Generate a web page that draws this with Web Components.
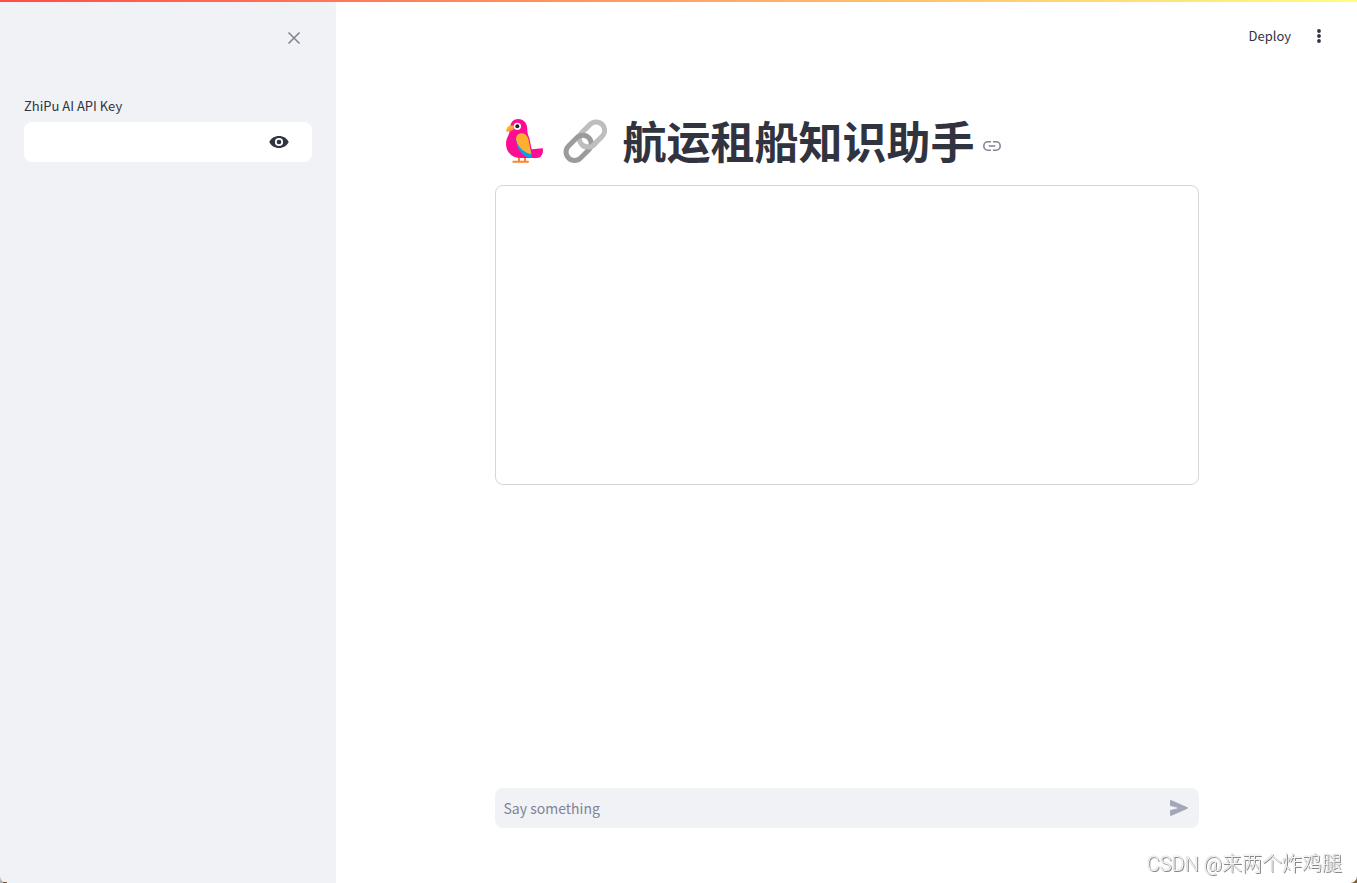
<!DOCTYPE html>
<html lang="zh-CN">
<head>
<meta charset="utf-8">
<meta name="viewport" content="width=device-width, initial-scale=1">
<title>航运租船知识助手</title>
<style>
    body {
        margin: 0;
        color: #31333f;
        background: #fff;
        font-family: "Noto Sans CJK SC", "Noto Sans", sans-serif;
    }
</style>
</head>
<body>
<app-shell>
    <side-panel slot="sidebar">
        <secret-input label="ZhiPu AI API Key"></secret-input>
    </side-panel>
    <app-toolbar slot="toolbar">Deploy</app-toolbar>
    <page-title>航运租船知识助手</page-title>
    <message-box></message-box>
    <chat-input slot="bottom" placeholder="Say something"></chat-input>
</app-shell>
<water-mark>CSDN @来两个炸鸡腿</water-mark>

<script>
class AppShell extends HTMLElement {
    constructor() {
        super();
        const shadowRoot = this.attachShadow({ mode: 'open' });
        shadowRoot.innerHTML = `
        <style>
            :host {
                display: grid;
                grid-template-columns: 336px minmax(0, 1fr);
                min-height: 100vh;
            }
            .decoration {
                position: fixed;
                top: 0;
                left: 0;
                right: 0;
                height: 2px;
                z-index: 2;
                background: linear-gradient(90deg, #ff4b4b, #fffd80);
            }
            .main {
                display: flex;
                flex-direction: column;
            }
            main {
                flex: 1;
                display: flex;
                flex-direction: column;
                gap: 18px;
                padding-top: 42px;
            }
            main, footer {
                box-sizing: border-box;
                width: 100%;
                max-width: 736px;
                margin: 0 auto;
                padding-left: 16px;
                padding-right: 16px;
            }
            footer {
                padding-bottom: 55px;
            }
        </style>
        <div class="decoration"></div>
        <slot name="sidebar"></slot>
        <div class="main">
            <slot name="toolbar"></slot>
            <main><slot></slot></main>
            <footer><slot name="bottom"></slot></footer>
        </div>
        `;
    }
}

class SidePanel extends HTMLElement {
    constructor() {
        super();
        const shadowRoot = this.attachShadow({ mode: 'open' });
        shadowRoot.innerHTML = `
        <style>
            :host {
                display: block;
                box-sizing: border-box;
                padding: 0 24px;
                background: #f0f2f6;
            }
            header {
                display: flex;
                justify-content: flex-end;
                padding: 26px 6px 46px 0;
            }
            button {
                display: flex;
                padding: 0;
                border: 0;
                background: none;
                color: #808495;
                cursor: pointer;
            }
        </style>
        <header>
            <button type="button" aria-label="Close sidebar">
                <svg width="24" height="24" viewBox="0 0 24 24" fill="none" stroke="currentColor" stroke-width="1.600">
                    <path d="M6.500 6.500l11 11M17.500 6.500l-11 11"/>
                </svg>
            </button>
        </header>
        <slot></slot>
        `;
    }
}

class SecretInput extends HTMLElement {
    constructor() {
        super();
        const shadowRoot = this.attachShadow({ mode: 'open' });
        shadowRoot.innerHTML = `
        <style>
            :host {
                display: block;
            }
            label {
                display: block;
                font-size: 13px;
                line-height: 20px;
                margin-bottom: 6px;
            }
            .field {
                display: flex;
                align-items: center;
                height: 40px;
                padding-right: 23px;
                border-radius: 8px;
                background: #fff;
            }
            input {
                flex: 1;
                min-width: 0;
                padding: 8px;
                border: 0;
                outline: 0;
                background: none;
                font: inherit;
                font-size: 14px;
                color: inherit;
            }
            button {
                display: flex;
                padding: 0;
                border: 0;
                background: none;
                color: #31333f;
                cursor: pointer;
            }
        </style>
        <label for="key"></label>
        <div class="field">
            <input id="key" type="password" autocomplete="off">
            <button type="button" aria-label="Show password text">
                <svg width="20" height="20" viewBox="0 0 20 20" fill="currentColor">
                    <path fill-rule="evenodd" d="M0.3 10C2 6.200 5.700 4 10 4s8 2.200 9.700 6C18 13.800 14.300 16 10 16S2 13.800 0.300 10zM10 5.900a4.100 4.100 0 1 0 0 8.200 4.100 4.100 0 0 0 0-8.200z"/>
                    <circle cx="10" cy="10" r="2.300"/>
                </svg>
            </button>
        </div>
        `;
    }

    connectedCallback() {
        const input = this.shadowRoot.querySelector('input');
        this.shadowRoot.querySelector('label').textContent = this.getAttribute('label');
        this.shadowRoot.querySelector('button').addEventListener('click', () => {
            input.type = input.type === 'password' ? 'text' : 'password';
        });
    }
}

class AppToolbar extends HTMLElement {
    constructor() {
        super();
        const shadowRoot = this.attachShadow({ mode: 'open' });
        shadowRoot.innerHTML = `
        <style>
            :host {
                display: flex;
                align-items: center;
                justify-content: flex-end;
                gap: 18px;
                height: 72px;
                padding-right: 28px;
            }
            button {
                display: flex;
                padding: 0;
                border: 0;
                background: none;
                color: inherit;
                font: inherit;
                font-size: 13px;
                line-height: 20px;
                cursor: pointer;
            }
        </style>
        <button type="button"><slot></slot></button>
        <button type="button" aria-label="Main menu">
            <svg width="20" height="20" viewBox="0 0 20 20" fill="currentColor">
                <circle cx="10" cy="5" r="1.900"/>
                <circle cx="10" cy="10" r="1.900"/>
                <circle cx="10" cy="15" r="1.900"/>
            </svg>
        </button>
        `;
    }
}

class PageTitle extends HTMLElement {
    constructor() {
        super();
        const shadowRoot = this.attachShadow({ mode: 'open' });
        shadowRoot.innerHTML = `
        <style>
            :host {
                display: block;
            }
            h1 {
                display: flex;
                align-items: center;
                gap: 16px;
                margin: 0;
                padding-left: 8px;
                font-size: 44px;
                font-weight: 700;
                line-height: 53px;
            }
            svg {
                flex: none;
            }
            .text {
                display: flex;
                align-items: center;
                gap: 8px;
            }
            a {
                display: flex;
                padding-top: 10px;
                color: #808495;
            }
        </style>
        <h1>
            <svg width="44" height="44" viewBox="39 43 132 132" aria-hidden="true">
                <path fill="none" stroke="#ff822d" stroke-width="6" stroke-linecap="round" stroke-linejoin="round" d="M87 157v14H70M105 157v14H90M87 171h5M105 171h9"/>
                <path fill="#ff0c94" d="M59 75C60 55 69 43 84 43c18 0 28 13 28 32 0 10 2 16 6 25l7 34 31-3c2 0 3 2 3 5 0 14-7 24-18 24H91c-25 0-43-18-43-43 0-18 12-28 11-42z"/>
                <path fill="#00a6ed" d="M79 103c-1 26 16 51 43 57h3c0-12-2-22-7-33L96 96z"/>
                <path fill="#ffb02e" d="M78 104c0-11 7-18 17-18 12 0 18 9 21 21l8 42c-21-4-40-20-46-45z"/>
                <path fill="#ffb02e" d="M71 64c-12-5-24 3-22 16 1 3 4 3 6 0 6-2 13-3 16-6z"/>
                <path fill="#ff822d" d="M51 78c4 5 14 4 20-3V64c-2 5-10 7-20 14z" opacity=".45"/>
                <circle cx="82" cy="65" r="11" fill="#fff"/>
                <circle cx="82" cy="65" r="6" fill="#212121"/>
            </svg>
            <svg width="44" height="44" viewBox="219 42 132 132" fill="none" stroke-width="15" aria-hidden="true">
                <rect x="263" y="63" width="86" height="51" rx="25.500" stroke="#bebebe" transform="rotate(-45 306 88.500)"/>
                <rect x="223" y="103" width="86" height="51" rx="25.500" stroke="#9b9b9b" transform="rotate(-45 266 128.500)"/>
                <path stroke="#bebebe" d="M281 122.500A25.500 25.500 0 0 0 312 119l4-4"/>
            </svg>
            <span class="text">
                <slot></slot>
                <a href="#title" aria-label="Link to heading">
                    <svg width="18" height="18" viewBox="0 0 18 18" fill="none" stroke="currentColor" stroke-width="1.600">
                        <path d="M8 4.800H5a4.200 4.200 0 0 0 0 8.400h3M10 4.800h3a4.200 4.200 0 0 1 0 8.400h-3M5.700 9h6.600"/>
                    </svg>
                </a>
            </span>
        </h1>
        `;
    }
}

class MessageBox extends HTMLElement {
    constructor() {
        super();
        const shadowRoot = this.attachShadow({ mode: 'open' });
        shadowRoot.innerHTML = `
        <style>
            :host {
                display: block;
                box-sizing: border-box;
                height: 300px;
                padding: 16px;
                overflow: auto;
                border: 1px solid rgba(49, 51, 63, 0.2);
                border-radius: 8px;
            }
        </style>
        <slot></slot>
        `;
    }
}

class ChatInput extends HTMLElement {
    constructor() {
        super();
        const shadowRoot = this.attachShadow({ mode: 'open' });
        shadowRoot.innerHTML = `
        <style>
            :host {
                display: block;
            }
            form {
                display: flex;
                align-items: center;
                height: 40px;
                padding-right: 10px;
                border-radius: 8px;
                background: #f0f2f6;
            }
            input {
                flex: 1;
                min-width: 0;
                padding: 0 9px;
                border: 0;
                outline: 0;
                background: none;
                color: inherit;
                font: inherit;
                font-size: 14px;
                line-height: 24px;
            }
            input::placeholder {
                color: #808495;
                opacity: 1;
            }
            button {
                display: flex;
                padding: 0;
                border: 0;
                background: none;
                color: #a3a8b8;
            }
        </style>
        <form>
            <input type="text">
            <button type="submit" aria-label="Send">
                <svg width="20" height="20" viewBox="0 0 20 20" fill="currentColor">
                    <path d="M1 3.200C1 2.300 1.700 1.900 2.500 2.200L18.400 9.300c.7.300.7 1.100 0 1.400L2.500 17.800C1.700 18.100 1 17.700 1 16.800V12.200L9.500 10 1 7.800z"/>
                </svg>
            </button>
        </form>
        `;
    }

    connectedCallback() {
        const input = this.shadowRoot.querySelector('input');
        input.placeholder = this.getAttribute('placeholder');
        input.setAttribute('aria-label', input.placeholder);
        this.shadowRoot.querySelector('form').addEventListener('submit', e => e.preventDefault());
    }
}

// signature over the page, with the rounded window corners
class WaterMark extends HTMLElement {
    constructor() {
        super();
        const shadowRoot = this.attachShadow({ mode: 'open' });
        shadowRoot.innerHTML = `
        <style>
            :host {
                position: fixed;
                right: 15px;
                bottom: 4px;
                color: #f4f4f4;
                font-family: Roboto, "Noto Sans CJK SC", sans-serif;
                font-size: 20px;
                font-weight: 300;
                line-height: 30px;
                text-shadow: 1px 1px 0 #888, 0 0 1px #999;
                pointer-events: none;
            }
            svg {
                position: fixed;
                bottom: 0;
            }
            .left { left: 0; }
            .right { right: 0; }
        </style>
        <slot></slot>
        <svg class="left" width="8" height="8" viewBox="0 0 8 8"><path fill="#b9b5b2" d="M0 1a7 7 0 0 0 7 7H0z"/><path fill="#74543f" d="M3 7h4v1H3z"/></svg>
        <svg class="right" width="8" height="8" viewBox="0 0 8 8"><path fill="#806040" d="M8 1a7 7 0 0 1-7 7h7z"/></svg>
        `;
    }
}

customElements.define('app-shell', AppShell);
customElements.define('side-panel', SidePanel);
customElements.define('secret-input', SecretInput);
customElements.define('app-toolbar', AppToolbar);
customElements.define('page-title', PageTitle);
customElements.define('message-box', MessageBox);
customElements.define('chat-input', ChatInput);
customElements.define('water-mark', WaterMark);
</script>
</body>
</html>
